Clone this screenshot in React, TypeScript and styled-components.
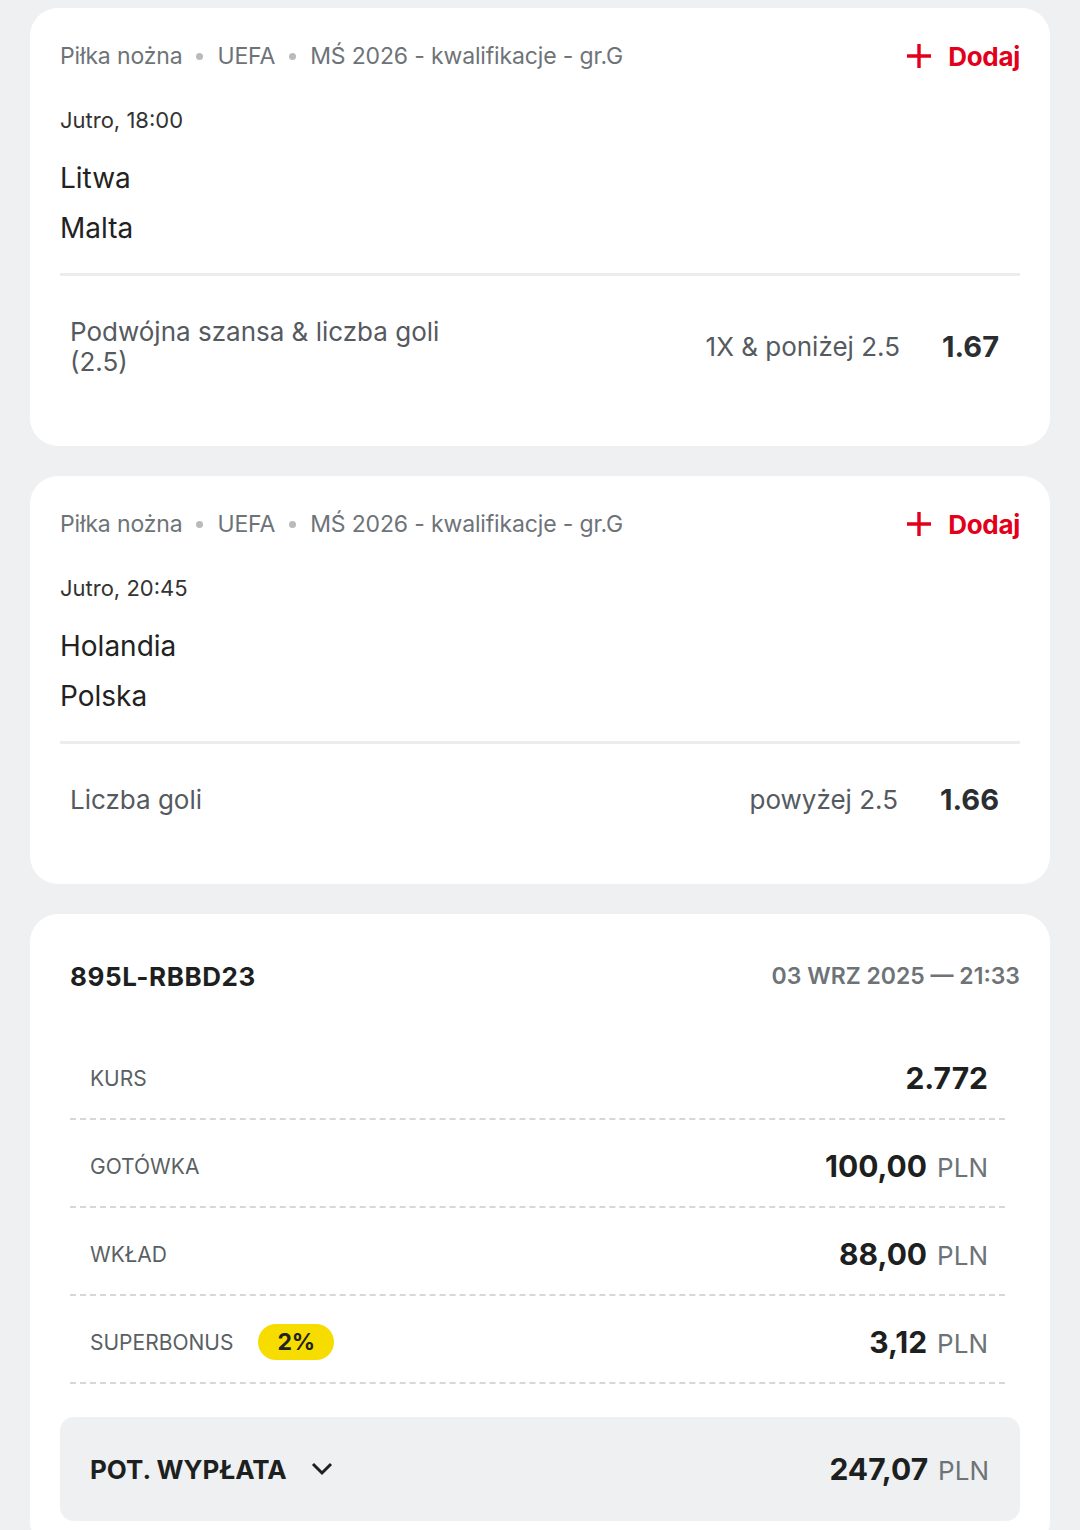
import styled, { createGlobalStyle } from 'styled-components';

const GlobalStyle = createGlobalStyle`
  html, body {
    margin: 0;
    padding: 0;
    background: #eef0f2;
    font-family: Inter, "Noto Sans", "Liberation Sans", sans-serif;
    color: #222;
  }
`

const Page = styled.div`
  display: flex;
  flex-direction: column;
  gap: 30px;
  padding: 8px 30px 0 30px;
  height: 1530px;
  overflow: hidden;
  box-sizing: border-box;
`

const Card = styled.section`
  background: #fff;
  border-radius: 28px;
  padding: 0 30px 28px 30px;
  display: flex;
  flex-direction: column;
  flex-shrink: 0;
`

const MetaRow = styled.div`
  display: flex;
  align-items: center;
  justify-content: space-between;
  height: 40px;
  margin-top: 28px;
`

const Meta = styled.div`
  display: flex;
  align-items: center;
  gap: 14px;
  font-size: 23px;
  letter-spacing: -0.15px;
  color: #6e7378;
`

const Dot = styled.span`
  width: 7px;
  height: 7px;
  border-radius: 50%;
  background: #b8bbbe;
`

const AddButton = styled.button`
  display: flex;
  align-items: center;
  gap: 16px;
  border: 0;
  background: none;
  padding: 0;
  color: #e2001a;
  font-family: inherit;
  font-size: 26px;
  font-weight: 700;
  letter-spacing: -0.3px;
`

const When = styled.div`
  font-size: 22px;
  color: #333;
  margin-top: 29px;
  height: 30px;
  line-height: 30px;
`

const Teams = styled.div`
  display: flex;
  flex-direction: column;
  margin-top: 18px;
  font-size: 28px;
  color: #222;
  line-height: 50px;
`

const Divider = styled.hr`
  border: 0;
  height: 3px;
  background: #ebecee;
  margin: 20px 0 0 0;
`

const Market = styled.div`
  display: flex;
  align-items: center;
  justify-content: space-between;
  padding: 41px 21px 41px 10px;
`

const MarketName = styled.div`
  font-size: 26px;
  color: #555a5f;
  line-height: 30px;
  max-width: 400px;
`

const Pick = styled.div`
  display: flex;
  align-items: center;
  gap: 42px;
  line-height: 30px;
`

const PickName = styled.span`
  font-size: 26px;
  color: #555a5f;
`

const Odd = styled.span`
  font-size: 29px;
  font-weight: 700;
  color: #2b2e31;
`

const SlipHead = styled.div`
  display: flex;
  align-items: center;
  justify-content: space-between;
  padding: 0 0 0 10px;
  margin-top: 45px;
  height: 34px;
`

const SlipId = styled.div`
  font-size: 26px;
  font-weight: 700;
  letter-spacing: 0.6px;
  color: #1d1f21;
`

const SlipDate = styled.div`
  font-size: 23px;
  font-weight: 600;
  color: #6e7378;
`

const Rows = styled.div`
  display: flex;
  flex-direction: column;
  margin: 39px 15px 0 10px;
`

const Row = styled.div`
  display: flex;
  align-items: center;
  justify-content: space-between;
  box-sizing: border-box;
  height: 88px;
  padding: 6px 17px 0 20px;
  border-bottom: 2px dashed #d5d7d9;
`

const Label = styled.div`
  display: flex;
  align-items: center;
  gap: 25px;
  font-size: 21px;
  color: #5a5f64;
`

const Badge = styled.span`
  background: #f7dc00;
  border-radius: 18px;
  padding: 0 19px;
  height: 36px;
  line-height: 36px;
  font-size: 23px;
  font-weight: 700;
  color: #222;
`

const Amount = styled.div`
  font-size: 30px;
  font-weight: 700;
  color: #1d1f21;
  span {
    font-size: 26px;
    font-weight: 400;
    color: #6e7378;
    margin-left: 10px;
  }
`

const Payout = styled.div`
  display: flex;
  align-items: center;
  justify-content: space-between;
  background: #eef0f2;
  border-radius: 14px;
  height: 104px;
  margin-top: 33px;
  padding: 0 31px 0 30px;
`

const PayoutLabel = styled.div`
  display: flex;
  align-items: center;
  gap: 24px;
  font-size: 26px;
  font-weight: 700;
  color: #1d1f21;
`

const Plus = () => (
  <svg width="26" height="26" viewBox="0 0 26 26">
    <path d="M13 1v24M1 13h24" stroke="#e2001a" strokeWidth="3.4" fill="none" />
  </svg>
)

const Chevron = () => (
  <svg width="22" height="14" viewBox="0 0 22 14">
    <path d="M2 2l9 9 9-9" stroke="#1d1f21" strokeWidth="3" fill="none" />
  </svg>
)

type Event = {
  when: string;
  home: string;
  away: string;
  market: string;
  pick: string;
  odd: string;
}

const events: Event[] = [
  { when: 'Jutro, 18:00', home: 'Litwa', away: 'Malta', market: 'Podwójna szansa & liczba goli (2.5)', pick: '1X & poniżej 2.5', odd: '1.67' },
  { when: 'Jutro, 20:45', home: 'Holandia', away: 'Polska', market: 'Liczba goli', pick: 'powyżej 2.5', odd: '1.66' },
]

const App = () => {
  return (
    <>
      <GlobalStyle />
      <Page>
        {events.map((ev, i) => (
          <Card key={`ev_${i}`}>
            <MetaRow>
              <Meta>
                <span>Piłka nożna</span>
                <Dot />
                <span>UEFA</span>
                <Dot />
                <span>MŚ 2026 - kwalifikacje - gr.G</span>
              </Meta>
              <AddButton><Plus />Dodaj</AddButton>
            </MetaRow>
            <When>{ev.when}</When>
            <Teams>
              <span>{ev.home}</span>
              <span>{ev.away}</span>
            </Teams>
            <Divider />
            <Market>
              <MarketName>{ev.market}</MarketName>
              <Pick>
                <PickName>{ev.pick}</PickName>
                <Odd>{ev.odd}</Odd>
              </Pick>
            </Market>
          </Card>
        ))}
        <Card>
          <SlipHead>
            <SlipId>895L-RBBD23</SlipId>
            <SlipDate>03 WRZ 2025 — 21:33</SlipDate>
          </SlipHead>
          <Rows>
            <Row>
              <Label>KURS</Label>
              <Amount>2.772</Amount>
            </Row>
            <Row>
              <Label>GOTÓWKA</Label>
              <Amount>100,00<span>PLN</span></Amount>
            </Row>
            <Row>
              <Label>WKŁAD</Label>
              <Amount>88,00<span>PLN</span></Amount>
            </Row>
            <Row>
              <Label>SUPERBONUS<Badge>2%</Badge></Label>
              <Amount>3,12<span>PLN</span></Amount>
            </Row>
          </Rows>
          <Payout>
            <PayoutLabel>POT. WYPŁATA<Chevron /></PayoutLabel>
            <Amount>247,07<span>PLN</span></Amount>
          </Payout>
        </Card>
      </Page>
    </>
  );
};

export default App;
